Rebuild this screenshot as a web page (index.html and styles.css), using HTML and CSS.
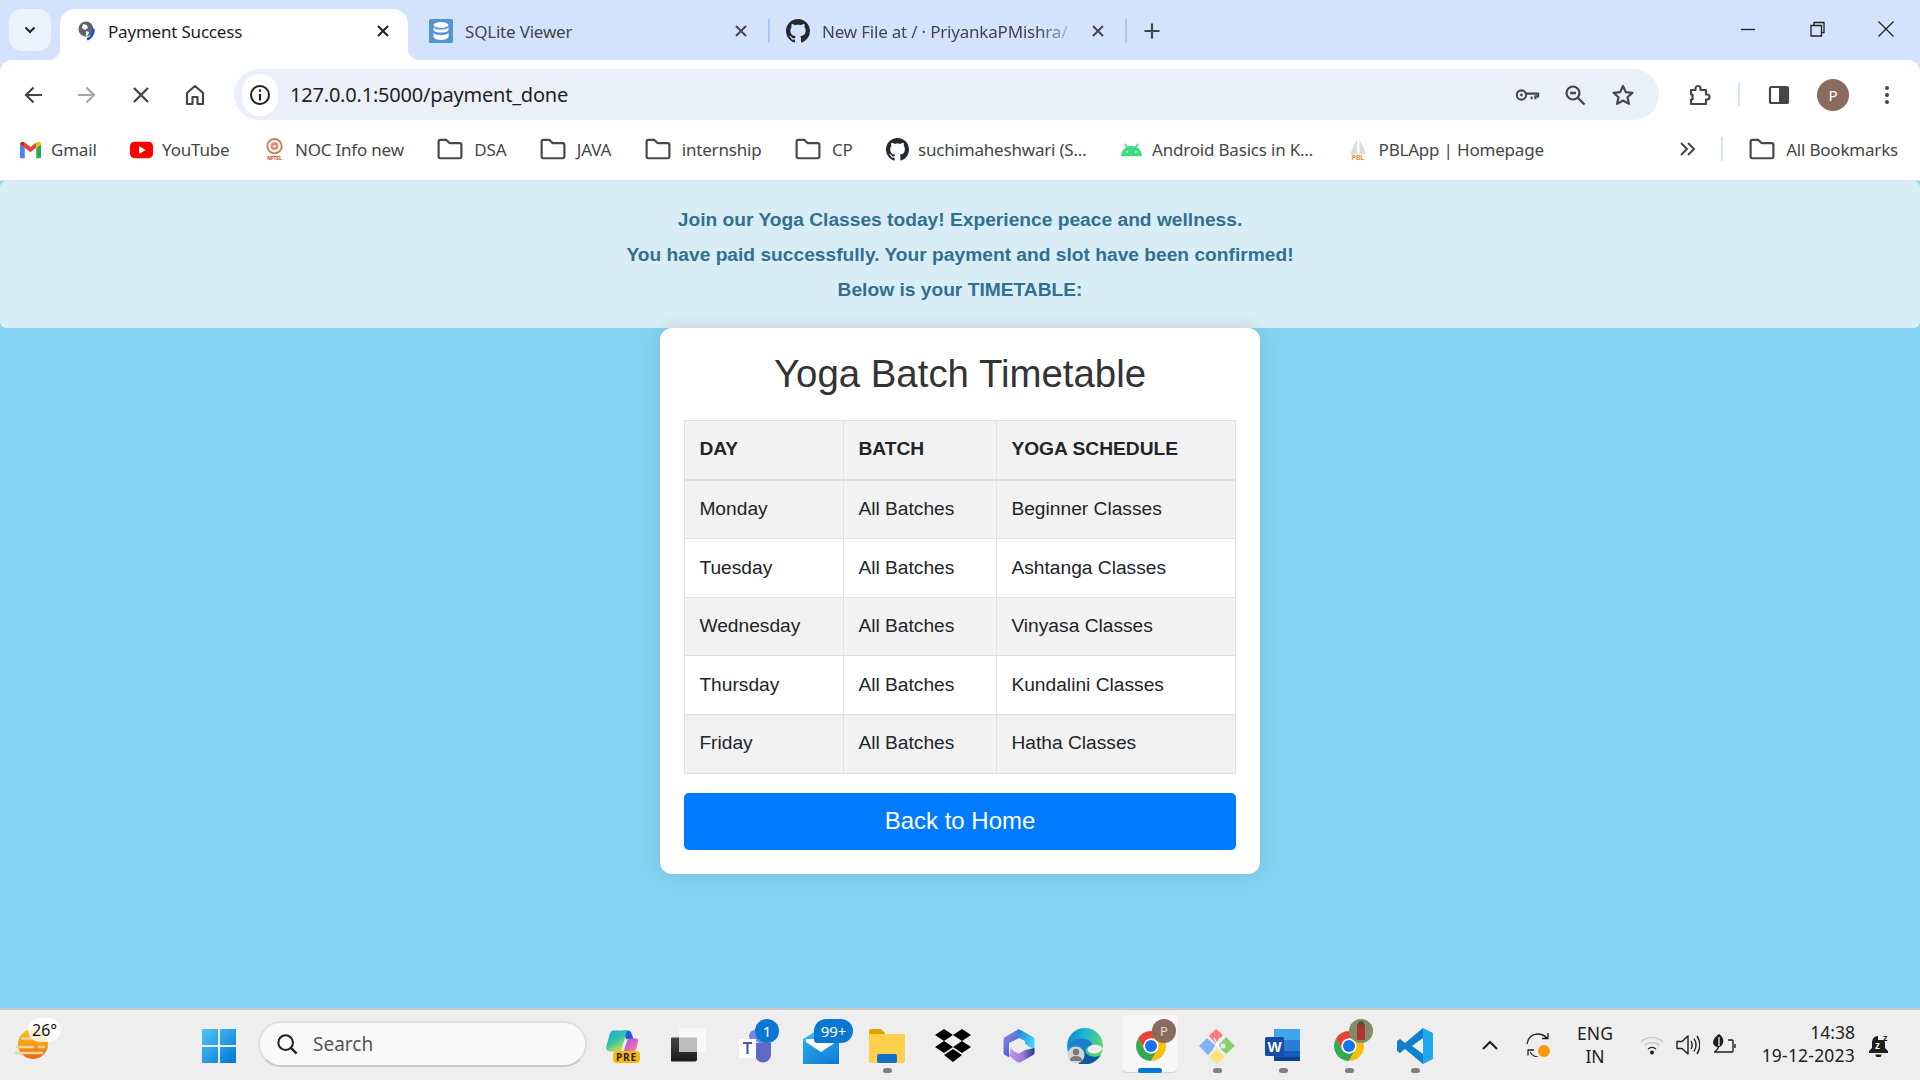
FILE: index.html
```html
<!DOCTYPE html>
<html lang="en">
<head>
<meta charset="utf-8">
<title>Payment Success</title>
<link rel="stylesheet" href="styles.css">
</head>
<body>
<svg class="defs" aria-hidden="true">
  <symbol id="gh" viewBox="0 0 16 16"><path fill="#24292f" d="M8 0C3.58 0 0 3.58 0 8c0 3.54 2.29 6.53 5.47 7.59.4.07.55-.17.55-.38 0-.19-.01-.82-.01-1.49-2.01.37-2.53-.49-2.69-.94-.09-.23-.48-.94-.82-1.13-.28-.15-.68-.52-.01-.53.63-.01 1.08.58 1.23.82.72 1.21 1.87.87 2.33.66.07-.52.28-.87.51-1.07-1.78-.2-3.64-.89-3.64-3.95 0-.87.31-1.59.82-2.15-.08-.2-.36-1.02.08-2.12 0 0 .67-.21 2.2.82.64-.18 1.32-.27 2-.27.68 0 1.36.09 2 .27 1.53-1.04 2.2-.82 2.2-.82.44 1.1.16 1.92.08 2.12.51.56.82 1.27.82 2.15 0 3.07-1.87 3.75-3.65 3.95.29.25.54.73.54 1.48 0 1.07-.01 1.93-.01 2.2 0 .21.15.46.55.38A8.013 8.013 0 0 0 16 8c0-4.42-3.58-8-8-8z"/></symbol>
  <symbol id="folder" viewBox="0 0 24 24"><path fill="none" stroke="#474747" stroke-width="2" stroke-linejoin="round" d="M1.500 5a1.500 1.500 0 0 1 1.500-1.500h5.500l3 3h9.500a1.500 1.500 0 0 1 1.500 1.500v11a1.500 1.500 0 0 1-1.500 1.500H3a1.500 1.500 0 0 1-1.500-1.500z"/></symbol>
  <symbol id="chrome" viewBox="0 0 48 48"><path fill="#ea4335" d="M24 4A20 20 0 0 1 41.300 14H24a10 10 0 0 0-8.700 15L6.700 14A20 20 0 0 1 24 4z"/><path fill="#34a853" d="M6.700 14l8.600 15a10 10 0 0 0 17.400 0L24 44A20 20 0 0 1 6.700 14z"/><path fill="#fbbc04" d="M41.300 14H24a10 10 0 0 1 8.700 15L24 44a20 20 0 0 0 17.300-30z"/><circle cx="24" cy="24" r="10" fill="#fff"/><circle cx="24" cy="24" r="8" fill="#1a73e8"/></symbol>
  <symbol id="x" viewBox="0 0 24 24"><path fill="none" stroke="currentColor" stroke-width="2.400" d="M6 6l12 12M18 6L6 18"/></symbol>
</svg>

<header class="chrome">
  <div class="tabstrip">
    <button class="tab-menu"><svg class="i16" viewBox="0 0 16 16"><path fill="none" stroke="#1f1f1f" stroke-width="2" d="M3.500 5.500 8 10l4.500-4.500"/></svg></button>
    <div class="tab tab-active">
      <svg class="fav-s" viewBox="0 0 20 20"><circle cx="9" cy="8" r="7.500" fill="#5f6368"/><path fill="#fff" d="M6 3l4 1 1 3-3 2-3-2zM9 10l3 1-1 3-2 1z"/><path fill="none" stroke="#0b57d0" stroke-width="2.600" stroke-linecap="round" d="M16.500 9c-.2 4-2 7-5.500 9"/></svg>
      <span class="tab-title">Payment Success</span>
      <svg class="tab-x dark"><use href="#x"/></svg>
    </div>
    <div class="tab tab-2">
      <svg class="fav-l" viewBox="0 0 24 24"><rect width="24" height="24" rx="1.500" fill="#5294cf"/><ellipse cx="12" cy="6" rx="7.500" ry="3" fill="#fff"/><path fill="#fff" d="M4.500 8c1 1.800 3.500 2.600 7.500 2.600S18.500 9.800 19.500 8v3c-1 1.800-3.500 2.600-7.500 2.600S5.500 12.800 4.500 11zM4.500 13.500c1 1.800 3.500 2.600 7.500 2.600s6.500-.8 7.500-2.600v4.500c-1 1.800-3.500 3-7.500 3s-6.500-1.200-7.500-3z"/></svg>
      <span class="tab-title">SQLite Viewer</span>
      <svg class="tab-x"><use href="#x"/></svg>
    </div>
    <div class="tab tab-3">
      <svg class="fav-l"><use href="#gh"/></svg>
      <span class="tab-title tab-fade">New File at / · PriyankaPMishra/</span>
      <svg class="tab-x"><use href="#x"/></svg>
    </div>
    <svg class="tab-plus" viewBox="0 0 24 24"><path fill="none" stroke="#444746" stroke-width="2.200" d="M12 4.500v15M4.500 12h15"/></svg>
    <div class="win-controls">
      <svg class="win-btn" viewBox="0 0 24 24"><path stroke="#1f1f1f" stroke-width="1.300" d="M5 12.500h14"/></svg>
      <svg class="win-btn" viewBox="0 0 24 24"><path fill="none" stroke="#1f1f1f" stroke-width="1.300" d="M6 8.500h10.500V19H6zM9 8.500V5.500h10v10h-2.500"/></svg>
      <svg class="win-btn" viewBox="0 0 24 24"><path stroke="#1f1f1f" stroke-width="1.300" d="M4.500 4.500l15 15M19.500 4.500l-15 15"/></svg>
    </div>
  </div>

  <div class="toolbar">
    <div class="nav-group">
      <svg class="tool" viewBox="0 0 24 24"><path fill="none" stroke="#444746" stroke-width="2.200" d="M21 12H5M12.500 4.500 5 12l7.500 7.500"/></svg>
      <svg class="tool" viewBox="0 0 24 24"><path fill="none" stroke="#a5a7aa" stroke-width="2.200" d="M3 12h16M11.500 4.500 19 12l-7.500 7.500"/></svg>
      <svg class="tool" viewBox="0 0 24 24"><path fill="none" stroke="#444746" stroke-width="2.400" d="M5 5l14 14M19 5L5 19"/></svg>
      <svg class="tool" viewBox="0 0 24 24"><path fill="none" stroke="#444746" stroke-width="2.200" stroke-linejoin="round" d="M4 21V10l8-7 8 7v11h-5.500v-7h-5v7z"/></svg>
    </div>
    <div class="omnibox">
      <span class="info-chip"><svg class="i24" viewBox="0 0 24 24"><circle cx="12" cy="12" r="9" fill="none" stroke="#1f1f1f" stroke-width="2"/><path stroke="#1f1f1f" stroke-width="2.200" d="M12 11v6.500M12 6.500v2.200"/></svg></span>
      <span class="url">127.0.0.1:5000/payment_done</span>
      <span class="omni-actions">
        <svg class="i28" viewBox="0 0 28 24"><circle cx="8" cy="12" r="5" fill="none" stroke="#444746" stroke-width="2.200"/><circle cx="8" cy="12" r="1.500" fill="#444746"/><path fill="none" stroke="#444746" stroke-width="2.200" d="M13 10.500h13v3h-3v3M19 13.500v3"/></svg>
        <svg class="i28" viewBox="0 0 24 24"><circle cx="10" cy="10" r="6.500" fill="none" stroke="#444746" stroke-width="2.200"/><path stroke="#444746" stroke-width="2.400" d="M15 15l6.500 6.500M7 10h6"/></svg>
        <svg class="i28" viewBox="0 0 24 24"><path fill="none" stroke="#444746" stroke-width="2.200" stroke-linejoin="round" d="M12 3l2.800 6.100 6.700.7-5 4.500 1.400 6.600L12 17.500l-5.900 3.400 1.400-6.600-5-4.500 6.700-.7z"/></svg>
      </span>
    </div>
    <div class="tool-right">
      <svg class="i28 ext" viewBox="0 0 24 24"><path fill="none" stroke="#444746" stroke-width="2.200" stroke-linejoin="round" d="M4 7h4.500V5.500a2.500 2.500 0 0 1 5 0V7H19v4.500h1a2.500 2.500 0 0 1 0 5h-1V21H4v-4.500h1.500v-5H4z"/></svg>
      <span class="vsep"></span>
      <svg class="i24 panel" viewBox="0 0 24 24"><rect x="3" y="4" width="18" height="16" rx="1.500" fill="none" stroke="#444746" stroke-width="2.200"/><rect x="12" y="4" width="9" height="16" fill="#444746"/></svg>
      <span class="avatar">P</span>
      <svg class="i24 dots" viewBox="0 0 24 24"><circle cx="12" cy="5" r="2" fill="#444746"/><circle cx="12" cy="12" r="2" fill="#444746"/><circle cx="12" cy="19" r="2" fill="#444746"/></svg>
    </div>
  </div>

  <nav class="bookmarks">
    <a class="bm"><svg class="bm-i" viewBox="0 0 24 24"><path fill="#4285f4" d="M1 20V6.500l5 3.800V21H2a1 1 0 0 1-1-1z"/><path fill="#34a853" d="M18 21V10.300l5-3.800V20a1 1 0 0 1-1 1z"/><path fill="#ea4335" d="M6 10.300V4.800l6 4.500 6-4.500v5.500l-6 4.500z"/><path fill="#c5221f" d="M1 6.500c0-2.500 3-3.300 5-1.700v5.500z"/><path fill="#fbbc04" d="M18 4.800c2-1.600 5-.8 5 1.700l-5 3.800z"/></svg><span>Gmail</span></a>
    <a class="bm"><svg class="bm-i" viewBox="0 0 24 24"><rect y="4" width="24" height="17" rx="4.500" fill="#f00"/><path fill="#fff" d="M9.500 8.500v8l7-4z"/></svg><span>YouTube</span></a>
    <a class="bm"><svg class="bm-i" viewBox="0 0 24 24"><circle cx="12" cy="8.500" r="7.500" fill="#fbf3ea" stroke="#b98a55" stroke-width="2"/><circle cx="12" cy="8.500" r="4" fill="#d98a7a"/><circle cx="12" cy="8.500" r="1.300" fill="#fff"/><text class="nptel" x="12" y="22.500">NPTEL</text></svg><span>NOC Info new</span></a>
    <a class="bm bm-f"><svg class="bm-i"><use href="#folder"/></svg><span>DSA</span></a>
    <a class="bm bm-f"><svg class="bm-i"><use href="#folder"/></svg><span>JAVA</span></a>
    <a class="bm bm-f"><svg class="bm-i"><use href="#folder"/></svg><span>internship</span></a>
    <a class="bm bm-f"><svg class="bm-i"><use href="#folder"/></svg><span>CP</span></a>
    <a class="bm"><svg class="bm-i"><use href="#gh"/></svg><span>suchimaheshwari (S...</span></a>
    <a class="bm"><svg class="bm-i" viewBox="0 0 24 24"><path fill="#3ddc84" d="M1 19a11 11 0 0 1 22 0z"/><path stroke="#3ddc84" stroke-width="1.500" d="M5 6l3 4M19 6l-3 4"/><circle cx="7.500" cy="14.500" r="1" fill="#fff"/><circle cx="16.500" cy="14.500" r="1" fill="#fff"/></svg><span>Android Basics in K...</span></a>
    <a class="bm"><svg class="bm-i" viewBox="0 0 24 24"><path fill="#dcdcdc" d="M10.500 1 3 17h7.500zM13 1l7 16h-7z"/><text class="pbl" x="11.500" y="23">PBL</text></svg><span>PBLApp | Homepage</span></a>
    <div class="bm-end">
      <svg class="i24 more" viewBox="0 0 24 24"><path fill="none" stroke="#444746" stroke-width="2" d="M6 6l6 6-6 6M13 6l6 6-6 6"/></svg>
      <span class="vsep"></span>
      <a class="bm bm-f bm-all"><svg class="bm-i"><use href="#folder"/></svg><span>All Bookmarks</span></a>
    </div>
  </nav>
</header>

<main class="page">
  <section class="alert">
    <p>Join our Yoga Classes today! Experience peace and wellness.</p>
    <p>You have paid successfully. Your payment and slot have been confirmed!</p>
    <p>Below is your TIMETABLE:</p>
  </section>
  <section class="card">
    <h2 class="card-title">Yoga Batch Timetable</h2>
    <table class="timetable">
      <colgroup><col class="c1"><col class="c2"><col class="c3"></colgroup>
      <thead><tr><th>DAY</th><th>BATCH</th><th>YOGA SCHEDULE</th></tr></thead>
      <tbody>
        <tr><td>Monday</td><td>All Batches</td><td>Beginner Classes</td></tr>
        <tr><td>Tuesday</td><td>All Batches</td><td>Ashtanga Classes</td></tr>
        <tr><td>Wednesday</td><td>All Batches</td><td>Vinyasa Classes</td></tr>
        <tr><td>Thursday</td><td>All Batches</td><td>Kundalini Classes</td></tr>
        <tr><td>Friday</td><td>All Batches</td><td>Hatha Classes</td></tr>
      </tbody>
    </table>
    <a class="home-btn">Back to Home</a>
  </section>
</main>

<footer class="taskbar">
  <div class="weather">
    <svg class="weather-i" viewBox="0 0 34 34"><defs><linearGradient id="sun" x1="0" y1="0" x2="0" y2="1"><stop offset="0" stop-color="#fbc02d"/><stop offset=".55" stop-color="#f59a11"/><stop offset="1" stop-color="#e8650a"/></linearGradient></defs><circle cx="18" cy="15" r="15" fill="url(#sun)"/><path stroke="#e9d29c" stroke-width="2.600" stroke-linecap="round" d="M7 9.500h13M2 18h16M24 18h5M1 24h26"/></svg>
    <span class="temp">26°</span>
  </div>
  <div class="slot">
    <svg class="t36" viewBox="0 0 36 36"><defs><linearGradient id="w1" x1="0" y1="0" x2="1" y2="1"><stop offset="0" stop-color="#4fc3f7"/><stop offset="1" stop-color="#0078d4"/></linearGradient></defs><path fill="url(#w1)" d="M1 1h16v16H1zM19 1h16v16H19zM1 19h16v16H1zM19 19h16v16H19z"/></svg>
  </div>
  <div class="search">
    <svg class="search-i" viewBox="0 0 24 24"><circle cx="10.500" cy="10.500" r="8" fill="none" stroke="#1f1f1f" stroke-width="2.200"/><path stroke="#1f1f1f" stroke-width="2.600" d="M16 16l6.500 6.500"/></svg>
    <span>Search</span>
  </div>
  <div class="apps">
    <div class="slot">
      <svg class="t36" viewBox="0 0 36 36"><defs><linearGradient id="co1" x1="0" y1="0" x2=".6" y2="1"><stop offset="0" stop-color="#1e9fe8"/><stop offset=".55" stop-color="#35c4a4"/><stop offset="1" stop-color="#cfe04a"/></linearGradient><linearGradient id="co2" x1="0" y1="0" x2="1" y2="1"><stop offset="0" stop-color="#9a5be0"/><stop offset=".6" stop-color="#e062c4"/><stop offset="1" stop-color="#f4a15a"/></linearGradient></defs><path fill="#1a5fd8" d="M18 2.500h5c2 0 2.800 1 3.400 2.800L28.500 11H21z"/><path fill="url(#co1)" d="M9 2.500h13L16 23.500H6c-3.500 0-5.500-2-4.800-5L4.500 7C5.300 4 6.500 2.500 9 2.500z"/><path fill="url(#co2)" d="M23 10.500h8c1.800 0 2.300 1 2 2.500l-1.600 7.500c-.5 2-1.800 3-3.800 3H18.500z"/></svg>
      <span class="pre">PRE</span>
    </div>
    <div class="slot">
      <svg class="t36" viewBox="0 0 36 36"><defs><linearGradient id="bk" x1="0" y1="0" x2="0" y2="1"><stop offset="0" stop-color="#444"/><stop offset="1" stop-color="#1c1c1c"/></linearGradient></defs><rect x="-1" y="9.500" width="27" height="24" rx="2" fill="url(#bk)"/><rect x="8" y="0" width="27" height="24" rx="2" fill="#f8f8f8"/><rect x="8" y="9.500" width="18" height="14.500" fill="#bdbdbd"/></svg>
    </div>
    <div class="slot">
      <svg class="t36" viewBox="0 0 36 36"><circle cx="26" cy="11" r="6" fill="#7b83eb"/><circle cx="18" cy="8" r="6" fill="#7b83eb"/><path fill="#6068c8" d="M12 15h22v11a8 8 0 0 1-16 1h-6z"/><rect x="2" y="11" width="17" height="19" fill="#fff"/><path stroke="#4b53bc" stroke-width="2.200" d="M6 15h9M10.500 15v11"/></svg>
      <span class="badge badge-teams">1</span>
    </div>
    <div class="slot">
      <svg class="t36" viewBox="0 0 36 36"><defs><linearGradient id="ma" x1="0" y1="0" x2="1" y2="1"><stop offset="0" stop-color="#38c6f4"/><stop offset="1" stop-color="#0f78d4"/></linearGradient></defs><path fill="url(#ma)" d="M0 11 18 0l18 11v25H0z"/><path fill="#fff" d="M3 11h30v3L18 24 3 14z"/><path fill="#0b6fc8" d="M0 13l36 23H0z" fill-opacity=".25"/></svg>
      <span class="badge badge-mail">99+</span>
    </div>
    <div class="slot open">
      <svg class="t36" viewBox="0 0 36 36"><path fill="#e0a200" d="M0 3a2 2 0 0 1 2-2h10l4 4v10H0z"/><path fill="#ffd04d" d="M0 6h36v27a2 2 0 0 1-2 2H2a2 2 0 0 1-2-2z"/><rect x="8" y="26" width="20" height="9" rx="2" fill="#0f6fc6"/></svg>
    </div>
    <div class="slot">
      <svg class="t36" viewBox="0 0 36 36"><path fill="#000" d="M9 1l9 6-9 6-9-6zM27 1l9 6-9 6-9-6zM9 13l9 6-9 6-9-6zM27 13l9 6-9 6-9-6zM18 21l9 6-9 7-9-7z"/></svg>
    </div>
    <div class="slot">
      <svg class="t36" viewBox="0 0 36 36"><defs><linearGradient id="hx1" x1="0" y1="0" x2="1" y2=".6"><stop offset="0" stop-color="#1f7fd8"/><stop offset="1" stop-color="#45d4f4"/></linearGradient><linearGradient id="hx2" x1="0" y1="0" x2=".6" y2="1"><stop offset="0" stop-color="#a58be8"/><stop offset="1" stop-color="#2b5fc8"/></linearGradient><linearGradient id="hx3" x1="0" y1="0" x2="1" y2="0"><stop offset="0" stop-color="#c79ae8"/><stop offset=".55" stop-color="#9a77d8"/><stop offset="1" stop-color="#1f3a8a"/></linearGradient></defs><path fill="url(#hx2)" d="M18 1 4 9a3 3 0 0 0-1.500 2.500v13c0 1 .5 2 1.500 2.500l4 2.300V15l10-5z"/><path fill="url(#hx1)" d="M16 2.200c1.300-.8 2.700-.8 4 0L32 9c1 .6 1.500 1.500 1.500 2.500V22L24 16v-3l-6-3z"/><path fill="url(#hx3)" d="M8 28l2-8c2 3 5 5 8 5.500l6-3.500 9.500-2V24.500c0 1-.5 2-1.500 2.500l-12 7c-1.300.8-2.700.8-4 0z"/><path fill="#eeeeee" d="M18 11l6 3v5.500c-1.500 3-3.500 4.500-6 5-2.500-.5-4.500-2-6-5V14z"/></svg>
    </div>
    <div class="slot">
      <svg class="t36" viewBox="0 0 36 36"><defs><linearGradient id="ed" x1="0" y1="0" x2="1" y2=".5"><stop offset="0" stop-color="#0f78c8"/><stop offset=".45" stop-color="#1fb5d8"/><stop offset="1" stop-color="#5fd866"/></linearGradient></defs><circle cx="18" cy="18" r="18" fill="url(#ed)"/><path fill="#0c5aa6" d="M12 36c8 1.500 16 0 22-9-5 3-12 2-15-2-2-3 0-7 6-8-6-5-15-3-19 3 2 6 3 12 6 16z"/><path fill="#1b7fd0" d="M1 20c1-8 10-11 18-9 3 1 6 3 6 6-6 1-9 4-7 8-6-7-12-8-17-5z"/><path fill="#eeeeee" d="M25 17c4-1 8 0 11 3-1 3-5 6-10 5.500-5-.5-9-5-1-8.500z"/><circle cx="9" cy="27" r="8.500" fill="#d4d4d4"/><circle cx="9" cy="24" r="3.200" fill="#7a7a7a"/><path fill="#7a7a7a" d="M3 33c0-4 3-5 6-5s6 1 6 5z"/></svg>
    </div>
    <div class="slot slot-active">
      <svg class="t36"><use href="#chrome"/></svg>
      <span class="mini-avatar">P</span>
    </div>
    <div class="slot open">
      <svg class="t36" viewBox="0 0 36 36"><path fill="#f77c7c" d="M17 1l7 6-6 7-7-7z"/><path fill="#f77c7c" d="M11 7l7 8" stroke="#f77c7c" stroke-width="3"/><path fill="#7fb2fb" d="M8 10l9 8-8 9-9-9z"/><path fill="#86d06a" d="M27 9l9 9-9 8-8-8z"/><path fill="#ffe27a" d="M18 21l8 8-8 7-8-7z"/><circle cx="24" cy="18" r="2.500" fill="#eeeeee"/><path stroke="#fff" stroke-width="1.400" d="M15 10l6 11M21 10l-6 11"/></svg>
    </div>
    <div class="slot open">
      <svg class="t36" viewBox="0 0 36 36"><path fill="#41a5ee" d="M9 1h26v11H9z"/><path fill="#2b7cd3" d="M9 12h26v11H9z"/><path fill="#185abd" d="M9 23h26v6H9z"/><path fill="#103f91" d="M9 29h26v4H9z"/><rect x="0" y="9" width="19" height="19" rx="1.500" fill="#124ea8"/><text class="word-w" x="9.500" y="24">W</text></svg>
    </div>
    <div class="slot open">
      <svg class="t36"><use href="#chrome"/></svg>
      <svg class="photo-avatar" viewBox="0 0 24 24"><circle cx="12" cy="12" r="12" fill="#7f8d6a"/><path fill="#b5332e" d="M8 5h8v16H8z"/><circle cx="12" cy="5" r="3" fill="#6b4a38"/></svg>
    </div>
    <div class="slot open">
      <svg class="t36" viewBox="0 0 36 36"><path fill="#0f80c9" d="M26 0v10L15 18l11 8v10L8 21l-5 4-3-2V13l3-2 5 4z"/><path fill="#1fa9f1" d="M26 0l10 5v26l-10 5z"/></svg>
    </div>
  </div>
  <div class="tray">
    <svg class="tray-i" viewBox="0 0 24 24"><path fill="none" stroke="#1f1f1f" stroke-width="2" d="M5 16l7-7 7 7"/></svg>
    <span class="sync">
      <svg class="tray-i" viewBox="0 0 24 24"><path fill="none" stroke="#1f1f1f" stroke-width="1.300" d="M1 11C2 5 6 1 12 1c4 0 7 2 9 4M22 0v5.500h-6M2 16.500v6M2 17h6M4 19c2 3 5 5 8 5"/><circle cx="18" cy="18" r="6" fill="#f59c0a"/></svg>
    </span>
    <span class="lang">ENG<br>IN</span>
    <svg class="tray-i" viewBox="0 0 24 24"><path fill="none" stroke="#c9c9c9" stroke-width="1.400" d="M1 9c6-6 16-6 22 0M4.500 12.500c4-4 11-4 15 0"/><path fill="none" stroke="#1f1f1f" stroke-width="1.400" d="M8 16c2.500-2 5.500-2 8 0"/><circle cx="12" cy="19.500" r="2" fill="#1f1f1f"/></svg>
    <svg class="tray-i" viewBox="0 0 24 24"><path fill="none" stroke="#1f1f1f" stroke-width="1.400" stroke-linejoin="round" d="M1 8.500h5L12 3v18l-6-5.500H1zM15 8c1.500 2.500 1.500 5.500 0 8M18 5.500c2.500 4 2.500 9 0 13M21 3c3.500 5.500 3.500 12.500 0 18"/></svg>
    <svg class="tray-i" viewBox="0 0 24 24"><path fill="none" stroke="#1f1f1f" stroke-width="1.400" d="M2 19h18a1 1 0 0 0 1-1V8a1 1 0 0 0-1-1h-4M23 11v4"/><path fill="#1f1f1f" d="M1 10c0-4 3-7 6-9 3 2 5 5 4 9-1 3-3 4-5 4s-4-1-5-4z"/><path fill="none" stroke="#fff" stroke-width="1.200" d="M7 4v9"/><path fill="none" stroke="#1f1f1f" stroke-width="1.400" d="M7 13c-1 3-3 5-4 6"/></svg>
    <span class="clock"><span>14:38</span><span class="date">19-12-2023</span></span>
    <svg class="bell" viewBox="0 0 24 24"><path fill="#1f1f1f" d="M10 3c-4 0-6 3-6 7v5l-3 3v2h19v-2l-3-3v-5c0-1-.2-2-.6-3H10z"/><path fill="#1f1f1f" d="M7.500 21.500h6a3 3 0 0 1-6 0z"/><text class="bell-z" x="7" y="15.500">z</text><text class="bell-z2" x="15" y="8">z</text></svg>
  </div>
</footer>
</body>
</html>
```

FILE: styles.css
```css
* { box-sizing: border-box; }
html, body { height: 100%; }
body {
  margin: 0;
  height: 1080px;
  display: flex;
  flex-direction: column;
  overflow: hidden;
  font-family: "Noto Sans", sans-serif;
  background: #85d3f3;
  color: #1f1f1f;
}
svg { display: block; flex: none; }
.defs { display: none; }
.i16 { width: 16px; height: 16px; }
.i24 { width: 24px; height: 24px; }
.i28 { width: 26px; height: 24px; }

/* ---------- browser frame ---------- */
.chrome { flex: none; background: #d3e3fd; }
.tabstrip {
  height: 60px;
  padding: 9px 0 0 9px;
  display: flex;
  align-items: flex-start;
}
.tab-menu {
  width: 42px;
  height: 42px;
  margin-right: 9px;
  padding: 0;
  border: 0;
  border-radius: 13px;
  background: #ebf2fe;
  display: flex;
  align-items: center;
  justify-content: center;
}
.tab {
  height: 51px;
  padding-bottom: 7px;
  display: flex;
  align-items: center;
  position: relative;
  font-size: 17px;
  letter-spacing: -.2px;
  color: #444746;
}
.tab-active {
  width: 348px;
  padding: 0 15px 7px 17px;
  background: #fff;
  border-radius: 15px 15px 0 0;
  color: #1f1f1f;
}
.tab-active::before,
.tab-active::after {
  content: "";
  position: absolute;
  bottom: 0;
  width: 12px;
  height: 12px;
}
.tab-active::before { left: -12px; background: radial-gradient(circle at 0 0, transparent 12px, #fff 12.500px); }
.tab-active::after { right: -12px; background: radial-gradient(circle at 100% 0, transparent 12px, #fff 12.500px); }
.tab-2 { width: 361px; padding: 0 18px 7px 21px; }
.tab-2::after,
.tab-3::after {
  content: "";
  position: absolute;
  right: -1px;
  top: 10px;
  height: 24px;
  width: 2px;
  background: #a8c7fa;
}
.tab-3 { width: 357px; padding: 0 18px 7px 17px; }
.fav-s { width: 20px; height: 20px; margin-right: 11px; }
.fav-l { width: 24px; height: 24px; margin-right: 12px; }
.tab-title { flex: 1; min-width: 0; white-space: nowrap; overflow: hidden; }
.tab-fade { -webkit-mask-image: linear-gradient(90deg, #000 85%, transparent); mask-image: linear-gradient(90deg, #000 85%, transparent); }
.tab-x { width: 20px; height: 20px; color: #474747; margin-left: 10px; }
.tab-x.dark { color: #1f1f1f; }
.tab-plus { width: 24px; height: 24px; margin: 10px 0 0 14px; }
.win-controls { margin-left: auto; display: flex; gap: 45px; padding: 0 22px 0 0; margin-top: 8px; }
.win-btn { width: 24px; height: 24px; }

.toolbar {
  height: 69px;
  padding: 9px 0;
  display: flex;
  align-items: stretch;
  background: #fff;
  border-radius: 12px 12px 0 0;
}
.nav-group { width: 234px; padding-left: 21px; display: flex; align-items: center; gap: 30px; }
.tool { width: 24px; height: 24px; }
.omnibox {
  width: 1425px;
  border-radius: 26px;
  background: #ebeff8;
  display: flex;
  align-items: center;
  padding-left: 8px;
}
.info-chip {
  width: 36px;
  height: 42px;
  border-radius: 21px;
  background: #fff;
  display: flex;
  align-items: center;
  justify-content: center;
}
.url { margin-left: 12px; font-size: 20px; letter-spacing: -.2px; color: #1f1f1f; }
.omni-actions { margin-left: auto; display: flex; gap: 22px; padding-right: 23px; }
.tool-right { flex: 1; display: flex; align-items: center; padding-left: 27px; }
.vsep { width: 2px; height: 24px; background: #d3e3fd; flex: none; }
.ext { margin-right: 26px; }
.panel { margin: 0 26px 0 27px; }
.avatar {
  width: 32px;
  height: 32px;
  border-radius: 50%;
  background: #8a6b5e;
  color: #fff;
  font-size: 15px;
  display: flex;
  align-items: center;
  justify-content: center;
}
.dots { margin-left: 26px; }

.bookmarks {
  height: 52px;
  padding: 0 0 11px 19px;
  display: flex;
  align-items: center;
  gap: 33.500px;
  background: #fff;
  border-bottom: 1px solid #e3e3e3;
  font-size: 17px;
  letter-spacing: -.2px;
  color: #444746;
}
.bm { display: flex; align-items: center; gap: 9px; white-space: nowrap; }
.bm-i { width: 23px; height: 23px; }
.bm-f { gap: 11px; }
.bm-f .bm-i { width: 26px; height: 26px; }
.bm-end { margin-left: auto; display: flex; align-items: center; padding-right: 22px; }
.more { margin-right: 22px; }
.bm-all { margin-left: 26px; }
.nptel { fill: #b5482f; font: 700 5px "Liberation Sans", sans-serif; text-anchor: middle; }
.pbl { fill: #f08a3c; font: 700 7px "Liberation Sans", sans-serif; text-anchor: middle; }

/* ---------- page ---------- */
.page {
  flex: 1;
  min-height: 0;
  font-family: "Liberation Sans", Arial, sans-serif;
  color: #212529;
}
.alert {
  height: 147px;
  padding: 21px 0;
  border-radius: 6px;
  background: #d9edf7;
  color: #31708f;
  text-align: center;
  font-size: 19.200px;
  font-weight: 700;
}
.alert p { margin: 0; line-height: 35px; }
.card {
  width: 600px;
  margin: 0 auto;
  padding: 24px;
  background: #fff;
  border-radius: 12px;
  box-shadow: 0 0 20px rgba(0, 0, 0, .1);
}
.card-title {
  margin: 0 0 24px;
  font-size: 38.400px;
  font-weight: 400;
  line-height: 44px;
  text-align: center;
  color: #333;
}
.timetable {
  width: 551px;
  table-layout: fixed;
  border-collapse: collapse;
  font-size: 19.200px;
  line-height: 28.800px;
}
.c1 { width: 159px; }
.c2 { width: 153px; }
.c3 { width: 239px; }
.timetable th,
.timetable td {
  padding: 14.400px;
  border: 1.200px solid #dee2e6;
  text-align: left;
  vertical-align: top;
}
.timetable th { background: #f2f2f2; border-bottom-width: 2.400px; }
.timetable tbody tr:nth-child(odd) td { background: #f2f2f2; }
.timetable tbody tr:last-child td { padding-bottom: 15.400px; }
.home-btn {
  display: block;
  margin-top: 19px;
  height: 57px;
  border-radius: 4.800px;
  background: #007bff;
  color: #fff;
  font-size: 24px;
  line-height: 55px;
  text-align: center;
}

/* ---------- taskbar ---------- */
.taskbar {
  flex: none;
  height: 72px;
  display: flex;
  align-items: stretch;
  background: #eeeeee;
  border-top: 2px solid #c8c8c8;
}
.weather { width: 186px; position: relative; flex: none; }
.weather-i { width: 34px; height: 34px; margin: 19px 0 0 15px; }
.temp {
  position: absolute;
  left: 28px;
  top: 8px;
  padding: 2px 4px;
  border-radius: 12px;
  background: rgba(255, 255, 255, .8);
  font-size: 16px;
  line-height: 20px;
  color: #111;
}
.slot { width: 66px; flex: none; position: relative; display: flex; align-items: center; justify-content: center; }
.t36 { width: 36px; height: 36px; margin-top: 1px; }
.open::after {
  content: "";
  position: absolute;
  left: 50%;
  bottom: 7px;
  width: 9px;
  height: 5px;
  margin-left: -4.500px;
  border-radius: 3px;
  background: #808080;
}
.slot-active::before {
  content: "";
  position: absolute;
  left: 4px;
  right: 6px;
  top: 5px;
  bottom: 8px;
  border-radius: 5px;
  background: #f7f7f7;
  box-shadow: 0 1px 1px #d0d0d0;
}
.slot-active svg { position: relative; }
.slot-active::after {
  content: "";
  position: absolute;
  left: 50%;
  bottom: 7px;
  width: 24px;
  height: 5px;
  margin-left: -13px;
  border-radius: 3px;
  background: #0078d4;
}
.search {
  width: 329px;
  height: 46px;
  margin: 11px 3px 0 6px;
  padding-left: 16px;
  display: flex;
  align-items: center;
  gap: 15px;
  border: 2px solid #dfdfdf;
  border-bottom-color: #c9c9c9;
  border-radius: 23px;
  background: #f9f9f9;
  font-size: 19px;
  color: #555;
}
.search-i { width: 22px; height: 24px; }
.apps { display: flex; flex: none; }
.pre {
  position: absolute;
  left: 23px;
  top: 41px;
  width: 27px;
  height: 12px;
  border-radius: 4px;
  background: #f9b90b;
  color: #222;
  font-size: 10px;
  font-weight: 700;
  line-height: 12px;
  letter-spacing: .8px;
  text-align: center;
}
.badge {
  position: absolute;
  top: 9px;
  display: flex;
  align-items: center;
  justify-content: center;
  background: #0a78d3;
  color: #fff;
  font-size: 15px;
  line-height: 1;
}
.badge-teams { left: 33px; width: 24px; height: 24px; border-radius: 50%; }
.badge-mail { left: 26px; width: 39px; height: 24px; border-radius: 12px 12px 12px 3px; }
.mini-avatar {
  position: absolute;
  left: 34px;
  top: 9px;
  width: 24px;
  height: 24px;
  border-radius: 50%;
  background: #8a6b5e;
  color: #ddd;
  font-size: 13px;
  display: flex;
  align-items: center;
  justify-content: center;
}
.photo-avatar { position: absolute; left: 32px; top: 9px; width: 26px; height: 24px; }
.word-w { fill: #fff; font: 700 15px "Liberation Sans", sans-serif; text-anchor: middle; }
.tray { flex: 1; display: flex; align-items: center; padding-left: 24px; }
.tray-i { width: 24px; height: 24px; margin: 0 6px; }
.sync { margin-left: 12px; }
.lang {
  width: 66px;
  margin: 0 6px;
  text-align: center;
  font-size: 17.500px;
  line-height: 23px;
  color: #222;
}
.clock {
  margin-left: auto;
  display: flex;
  flex-direction: column;
  align-items: flex-end;
  font-size: 17.500px;
  line-height: 23px;
  color: #222;
  padding-bottom: 2px;
}
.date { letter-spacing: .2px; }
.bell { width: 24px; height: 24px; margin: 0 28px 0 13px; }
.bell-z { fill: #fff; font: 700 10px "Liberation Sans", sans-serif; }
.bell-z2 { fill: #1f1f1f; font: 700 9px "Liberation Sans", sans-serif; }
```
